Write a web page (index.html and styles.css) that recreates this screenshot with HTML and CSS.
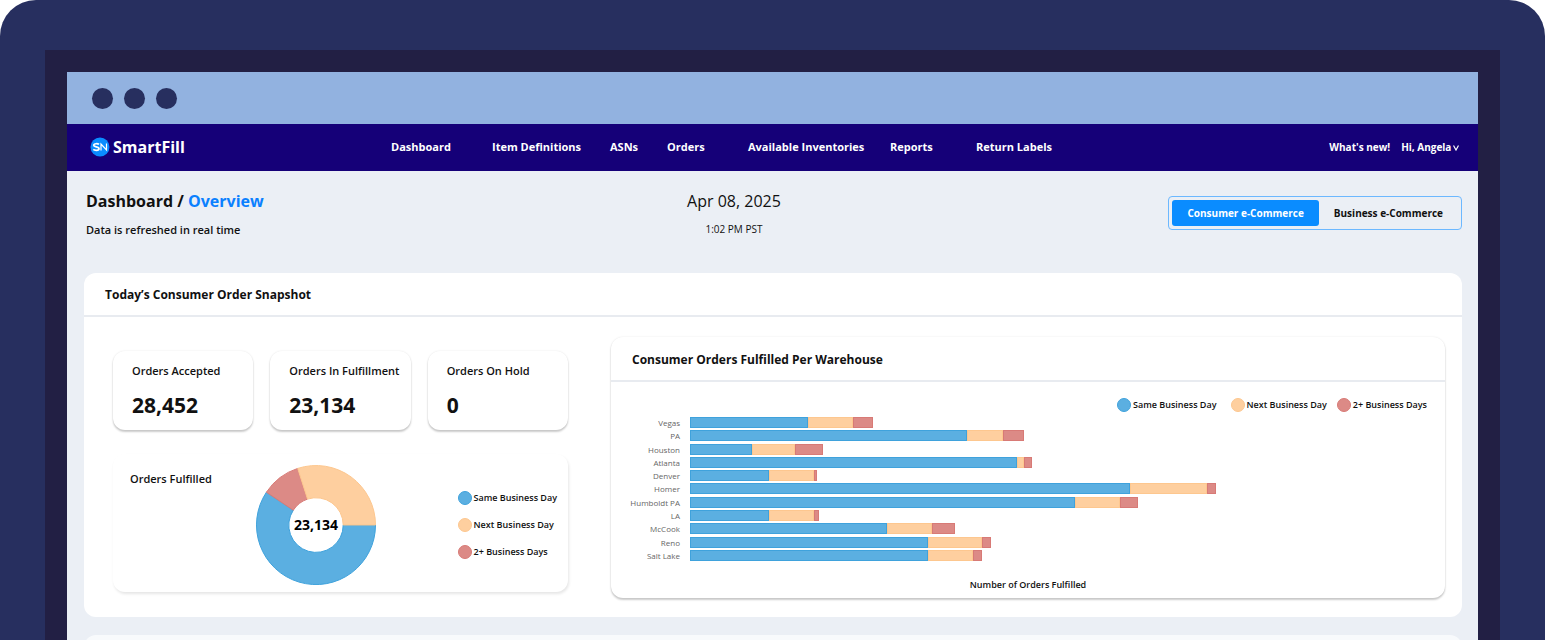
FILE: index.html
```html
<!DOCTYPE html>
<html lang="en">
<head>
  <meta charset="UTF-8" />
  <title>SmartFill Dashboard</title>
  <link rel="stylesheet" href="styles.css">
</head>
<body>

<div class="device">
  <div class="bezel">
    <div class="screen">

      <div class="titlebar">
        <span class="dot"></span>
        <span class="dot"></span>
        <span class="dot"></span>
      </div>

      <header class="navbar">
        <a class="brand" href="#">
          <svg viewBox="0 0 20 20" aria-hidden="true">
            <circle cx="10" cy="10" r="9.5" fill="#0a8cff" />
            <path d="M9 7.4C8 6.5 3.800 6.200 3.700 8.300C3.700 10.400 9 9.300 9 11.700C9 13.800 4.500 13.600 3.300 12.400" fill="none" stroke="#fff" stroke-width="1.700" />
            <path d="M11 13.500V7L16.500 13V6.500" fill="none" stroke="#fff" stroke-width="1.200" />
          </svg>
          SmartFill
        </a>
        <nav class="menu">
          <a href="#">Dashboard</a>
          <a href="#">Item Definitions</a>
          <a href="#">ASNs</a>
          <a href="#">Orders</a>
          <a href="#">Available Inventories</a>
          <a href="#">Reports</a>
          <a href="#">Return Labels</a>
        </nav>
        <div class="account">
          <a href="#">What's new!</a>
          <button type="button">Hi, Angela
            <svg viewBox="0 0 6 6" aria-hidden="true"><path d="M0.500 0.500L3 5L5.500 0.500" fill="none" stroke="#fff" stroke-width="1.200" /></svg>
          </button>
        </div>
      </header>

      <main>
        <div class="page-head">
          <div>
            <h1>Dashboard / <a href="#">Overview</a></h1>
            <p class="note">Data is refreshed in real time</p>
          </div>
          <div class="clock">
            <p class="date">Apr 08, 2025</p>
            <p class="time">1:02 PM PST</p>
          </div>
          <div class="switch">
            <button type="button" class="active">Consumer e-Commerce</button>
            <button type="button">Business e-Commerce</button>
          </div>
        </div>

        <section class="panel">
          <h2>Today’s Consumer Order Snapshot</h2>
          <div class="panel-body">

            <div class="left">
              <div class="stats">
                <div class="card stat">
                  <h3>Orders Accepted</h3>
                  <strong>28,452</strong>
                </div>
                <div class="card stat">
                  <h3>Orders In Fulfillment</h3>
                  <strong>23,134</strong>
                </div>
                <div class="card stat">
                  <h3>Orders On Hold</h3>
                  <strong>0</strong>
                </div>
              </div>

              <div class="card fulfilled">
                <h3>Orders Fulfilled</h3>
                <svg class="donut" viewBox="0 0 120 120" role="img" aria-label="Orders fulfilled by speed">
                  <path d="M119.500 60A59.500 59.500 0 1 1 10.400 27.200L37.300 45.200A27.200 27.200 0 1 0 87.200 60Z" fill="#5bafe1" stroke="#3fa2dc" />
                  <path d="M10.400 27.200A59.500 59.500 0 0 1 41.700 3.400L51.500 34.100A27.200 27.200 0 0 0 37.300 45.200Z" fill="#dc8a86" stroke="#d87a76" />
                  <path d="M41.700 3.400A59.500 59.500 0 0 1 119.500 60L87.200 60A27.200 27.200 0 0 0 51.500 34.100Z" fill="#fecf9f" stroke="#fdc78f" />
                  <text x="60" y="65">23,134</text>
                </svg>
                <ul class="legend stacked">
                  <li class="same">Same Business Day</li>
                  <li class="next">Next Business Day</li>
                  <li class="late">2+ Business Days</li>
                </ul>
              </div>
            </div>

            <div class="card warehouses">
              <h2>Consumer Orders Fulfilled Per Warehouse</h2>
              <ul class="legend">
                <li class="same">Same Business Day</li>
                <li class="next">Next Business Day</li>
                <li class="late">2+ Business Days</li>
              </ul>
              <div class="chart" id="chart"></div>
              <p class="axis">Number of Orders Fulfilled</p>
            </div>

          </div>
        </section>

        <section class="panel next-panel"></section>
      </main>

    </div>
  </div>
</div>

<script>
  // warehouse, same day, next day, 2+ days
  const AXIS_MAX = 737;
  const warehouses = [
    ["Vegas", 118, 45, 20],
    ["PA", 277, 36, 21],
    ["Houston", 62, 43, 28],
    ["Atlanta", 327, 7, 8],
    ["Denver", 79, 45, 3],
    ["Homer", 440, 77, 9],
    ["Humboldt PA", 385, 45, 18],
    ["LA", 79, 45, 5],
    ["McCook", 197, 45, 23],
    ["Reno", 238, 54, 9],
    ["Salt Lake", 238, 45, 9]
  ];

  const kinds = ["same", "next", "late"];
  const chart = document.getElementById("chart");

  warehouses.forEach(([name, ...counts]) => {
    const row = document.createElement("div");
    row.className = "row";
    const bars = counts.map((n, i) =>
      `<span class="bar ${kinds[i]}" style="width: ${n / AXIS_MAX * 100}%"></span>`
    ).join("");
    row.innerHTML = `<span class="name">${name}</span><div class="track">${bars}</div>`;
    chart.appendChild(row);
  });
</script>

</body>
</html>
```

FILE: styles.css
```css
:root {
  --frame: #272f5f;
  --bezel: #221f44;
  --nav: #150078;
  --page: #ebeff5;
  --accent: #0a8cff;
  --same: #5bafe1;
  --same-edge: #3fa2dc;
  --next: #fecf9f;
  --next-edge: #fdc78f;
  --late: #dc8a86;
  --late-edge: #d87a76;
}

* {
  box-sizing: border-box;
}

body {
  margin: 0;
  height: 100vh;
  overflow: hidden;
  background: #fff;
  color: #111;
  font-family: "Open Sans", "Noto Sans", sans-serif;
  font-size: 11px;
  font-weight: 600;
  line-height: 16px;
}

h1, h2, h3, p, ul {
  margin: 0;
  padding: 0;
}

a {
  color: inherit;
  text-decoration: none;
}

button {
  border: none;
  background: none;
  padding: 0;
  color: inherit;
  font: inherit;
  cursor: pointer;
}

.device {
  height: calc(100vh - 1px);
  overflow: hidden;
  padding: 50px 45px 0;
  background: var(--frame);
  border-radius: 36px 36px 0 0;
}

.bezel {
  padding: 22px 22px 0;
  background: var(--bezel);
}

.screen {
  background: var(--page);
}

.titlebar {
  display: flex;
  align-items: center;
  gap: 11px;
  height: 52px;
  padding-left: 25px;
  background: #92b2e0;
}

.dot {
  width: 21px;
  height: 21px;
  border-radius: 50%;
  background: var(--frame);
}

.navbar {
  display: grid;
  grid-template-columns: 301px 1fr auto;
  align-items: center;
  height: 47px;
  padding: 0 19px 2px 23px;
  background: var(--nav);
  color: #fff;
  font-weight: 700;
}

.brand {
  display: flex;
  align-items: center;
  gap: 3px;
  font-size: 16px;
}

.brand svg {
  width: 20px;
  height: 20px;
}

.menu {
  display: grid;
  grid-template-columns: 101px 118px 57px 81px 142px 86px auto;
  justify-content: start;
  white-space: nowrap;
}

.account {
  display: flex;
  gap: 11px;
  font-size: 10px;
}

.account svg {
  width: 6px;
  height: 6px;
  margin-left: -1px;
}

main {
  padding: 18px 16px 0 17px;
}

.page-head {
  display: grid;
  grid-template-columns: 600fr auto 680fr;
  align-items: start;
  padding-left: 2px;
  min-height: 84px;
}

h1 {
  font-size: 16px;
  font-weight: 700;
  line-height: 24px;
}

h1 a {
  color: #0a80ff;
}

.note {
  margin-top: 9px;
}

.clock {
  text-align: center;
  font-weight: 400;
}

.date {
  font-size: 16px;
  line-height: 24px;
}

.time {
  margin-top: 8px;
  font-size: 10px;
}

.switch {
  justify-self: end;
  display: flex;
  margin-top: 7px;
  padding: 3px;
  border: 1px solid #6cb8ff;
  border-radius: 4px;
  font-size: 10px;
  font-weight: 700;
}

.switch button {
  height: 26px;
  padding: 0 15px;
  border-radius: 3px;
}

.switch .active {
  background: var(--accent);
  color: #fff;
}

.panel {
  background: #fff;
  border-radius: 12px;
}

.panel > h2 {
  padding: 14px 21px 12px;
}

h2 {
  border-bottom: 2px solid #e8ebf0;
  font-size: 12px;
  font-weight: 700;
}

.panel-body {
  display: grid;
  grid-template-columns: 455fr 834fr;
  gap: 43px;
  padding: 20px 17px 19px 29px;
}

.next-panel {
  margin-top: 18px;
  height: 60px;
  background: #f8fafc;
}

.card {
  background: #fff;
  border-radius: 12px;
  box-shadow: 0 2px 2px rgba(0, 0, 0, 0.2), 0 0 2px rgba(0, 0, 0, 0.1);
}

.left {
  display: flex;
  flex-direction: column;
  gap: 24px;
  padding: 14px 0 6px;
}

.stats {
  display: grid;
  grid-template-columns: repeat(3, 1fr);
  gap: 17px;
}

.stat {
  padding: 12px 0 11px 19px;
  white-space: nowrap;
}

h3 {
  font-size: 11px;
  font-weight: 600;
}

.stat strong {
  display: block;
  margin-top: 12px;
  font-size: 21px;
  font-weight: 700;
  line-height: 28px;
}

.fulfilled {
  flex: 1;
  display: grid;
  grid-template-columns: 126px 120px 1fr;
  align-items: center;
  padding: 3px 11px 0 17px;
  box-shadow: 1px 2px 3px rgba(0, 0, 0, 0.1);
}

.fulfilled h3 {
  align-self: start;
  margin-top: 14px;
}

.donut {
  width: 120px;
  height: 120px;
}

.donut text {
  font-size: 14px;
  font-weight: 700;
  text-anchor: middle;
}

.legend {
  display: flex;
  justify-content: flex-end;
  gap: 10px;
  list-style: none;
  font-size: 9px;
}

.legend li {
  display: flex;
  align-items: center;
  gap: 2px;
  white-space: nowrap;
}

.legend li::before {
  content: "";
  width: 12px;
  height: 12px;
  border: 1px solid;
  border-radius: 50%;
}

.stacked {
  flex-direction: column;
  justify-self: end;
  gap: 11px;
}

.same::before, .bar.same {
  background: var(--same);
  border-color: var(--same-edge) !important;
}

.next::before, .bar.next {
  background: var(--next);
  border-color: var(--next-edge) !important;
}

.late::before, .bar.late {
  background: var(--late);
  border-color: var(--late-edge) !important;
}

.warehouses h2 {
  padding: 15px 21px 12px;
}

.warehouses .legend {
  padding: 15px 18px 4px 0;
}

.warehouses .legend .same {
  margin-right: 4px;
}

.chart {
  display: flex;
  flex-direction: column;
  justify-content: space-between;
  height: 144px;
  padding-right: 18px;
}

.row {
  display: grid;
  grid-template-columns: 69px 1fr;
  gap: 10px;
  align-items: center;
  height: 11px;
}

.name {
  color: #666;
  font-size: 8px;
  font-weight: 400;
  line-height: 11px;
  text-align: right;
  white-space: nowrap;
}

.track {
  display: flex;
}

.bar {
  height: 11px;
  border: 1px solid;
}

.axis {
  padding: 16px 0 5px;
  text-align: center;
  font-size: 9px;
}
```
